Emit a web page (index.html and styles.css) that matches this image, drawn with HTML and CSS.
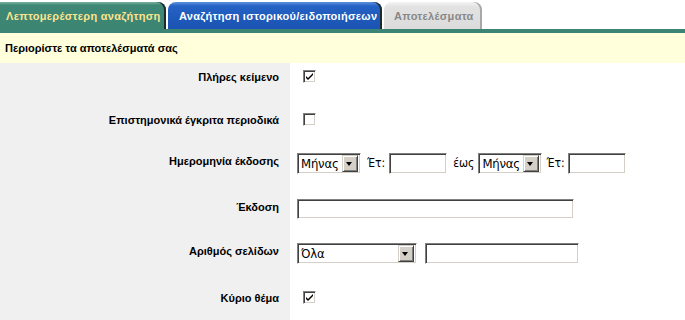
FILE: index.html
```html
<!DOCTYPE html>
<html lang="el">
<head>
  <meta charset="UTF-8" />
  <title>Λεπτομερέστερη αναζήτηση</title>
  <link rel="stylesheet" href="styles.css">
</head>
<body>
  <div class="tabs">
    <div class="tab tab-green">Λεπτομερέστερη αναζήτηση</div>
    <div class="tab tab-blue">Αναζήτηση ιστορικού/ειδοποιήσεων</div>
    <div class="tab tab-grey">Αποτελέσματα</div>
  </div>
  <div class="tab-bar"></div>
  <div class="refine">Περιορίστε τα αποτελέσματά σας</div>

  <div class="form">
    <div class="row row-check">
      <div class="label">Πλήρες κείμενο</div>
      <div class="field">
        <span class="check"><svg viewBox="0 0 9 9"><path d="M1 4l2 2 5-5v2l-5 5-2-2z"/></svg></span>
      </div>
    </div>
    <div class="row row-check">
      <div class="label">Επιστημονικά έγκριτα περιοδικά</div>
      <div class="field"><span class="check"></span></div>
    </div>
    <div class="row row-tall">
      <div class="label">Ημερομηνία έκδοσης</div>
      <div class="field">
        <div class="select sel-month"><span class="select-text">Μήνας</span><span class="select-btn"></span></div>
        <span class="txt txt-year">Έτ:</span>
        <span class="input in-year"></span>
        <span class="txt txt-to">έως</span>
        <div class="select sel-month"><span class="select-text">Μήνας</span><span class="select-btn"></span></div>
        <span class="txt txt-year2">Έτ:</span>
        <span class="input in-year"></span>
      </div>
    </div>
    <div class="row">
      <div class="label">Έκδοση</div>
      <div class="field"><span class="input in-wide"></span></div>
    </div>
    <div class="row row-mid">
      <div class="label">Αριθμός σελίδων</div>
      <div class="field">
        <div class="select sel-pages"><span class="select-text">Όλα</span><span class="select-btn"></span></div>
        <span class="input in-pages"></span>
      </div>
    </div>
    <div class="row row-check">
      <div class="label">Κύριο θέμα</div>
      <div class="field">
        <span class="check"><svg viewBox="0 0 9 9"><path d="M1 4l2 2 5-5v2l-5 5-2-2z"/></svg></span>
      </div>
    </div>
  </div>
</body>
</html>
```

FILE: styles.css
```css
* { margin: 0; padding: 0; box-sizing: border-box; }
html, body { height: 100%; }
body {
  font-family: 'Liberation Sans', Arial, sans-serif;
  font-size: 11px;
  background: #fff;
  color: #000;
  display: flex;
  flex-direction: column;
  overflow: hidden;
}
.tabs {
  flex-shrink: 0;
  display: flex;
  align-items: flex-end;
  height: 29px;
  padding-top: 2px;
  gap: 2px;
}
.tab {
  height: 27px;
  padding: 0 6px;
  display: flex;
  align-items: center;
  font-weight: bold;
  font-size: 11px;
  letter-spacing: 0.3px;
  border-radius: 8px 8px 0 0;
  box-shadow: inset -2px 0 0 #1d2a2a;
  white-space: nowrap;
}
.tab-green {
  width: 166px;
  border-radius: 0 8px 0 0;
  background: linear-gradient(#7fb4a4 0, #3f8876 3px, #3d8573);
  color: #fbe48e;
}
.tab-blue {
  width: 214px;
  padding-left: 11px;
  background: linear-gradient(#5f92dc 0, #2462c4 4px, #1a53b2);
  color: #fff;
}
.tab-grey {
  width: 98px;
  padding-left: 10px;
  background: linear-gradient(#f4f4f4 0, #e2e2e2 5px, #dcdcdc);
  color: #888;
  box-shadow: inset -2px 0 0 #a8a8a8;
}
.tab-bar {
  flex-shrink: 0;
  height: 4px;
  background: #3c8473;
}
.refine {
  flex-shrink: 0;
  height: 30px;
  background: #ffffdc;
  font-weight: bold;
  font-size: 11px;
  padding: 0 0 0 5px;
  display: flex;
  align-items: center;
}
.form {
  flex: 1;
  min-height: 0;
  overflow: hidden;
  display: flex;
  flex-direction: column;
  background: linear-gradient(to right, #f0f0f0 290px, #fff 290px);
}
.row {
  flex-shrink: 0;
  display: grid;
  grid-template-columns: 290px 1fr;
  height: 44px;
}
.row-check { height: 43px; }
.row-tall { height: 46px; }
.row-mid { height: 45px; }
.label {
  text-align: right;
  font-weight: bold;
  padding: 5px 11px 0 0;
  line-height: 14px;
}
.row-check .label { padding-top: 7px; }
.field {
  display: flex;
  align-items: flex-start;
  padding: 4px 0 0 7px;
  font-family: Tahoma, 'DejaVu Sans Condensed', 'Liberation Sans', sans-serif;
  font-size: 12px;
}
.row-check .field { padding: 7px 0 0 13px; }
.check {
  width: 13px;
  height: 13px;
  background: #fff;
  border: 1px solid;
  border-color: #808080 #fff #fff #808080;
  box-shadow: inset 1px 1px 0 #404040, inset -1px -1px 0 #d4d0c8;
  display: flex;
  align-items: center;
  justify-content: center;
}
.check svg {
  width: 9px;
  height: 9px;
  fill: #000;
}
.input {
  display: inline-block;
  height: 21px;
  background: #fff;
  border: 1px solid;
  border-color: #808080 #fff #fff #808080;
  box-shadow: inset 1px 1px 0 #404040, inset -1px -1px 0 #d4d0c8;
}
.in-year { width: 58px; }
.in-wide { width: 277px; height: 20px; }
.in-pages { width: 154px; margin-left: 8px; }
.select {
  display: flex;
  align-items: center;
  height: 21px;
  background: #fff;
  border: 1px solid;
  border-color: #808080 #fff #fff #808080;
  box-shadow: inset 1px 1px 0 #404040, inset -1px -1px 0 #d4d0c8;
  padding: 2px;
}
.sel-month { width: 64px; }
.sel-pages { width: 120px; }
.select-text {
  flex: 1;
  padding-left: 1px;
  font-size: 13px;
  line-height: 16px;
  color: #000;
  letter-spacing: -0.2px;
}
.select-btn {
  width: 16px;
  height: 17px;
  background: #d4d0c8;
  border: 1px solid;
  border-color: #d4d0c8 #404040 #404040 #d4d0c8;
  box-shadow: inset 1px 1px 0 #fff, inset -1px -1px 0 #808080;
  position: relative;
}
.select-btn::after {
  content: '';
  position: absolute;
  left: 3px;
  top: 6px;
  border-left: 3.5px solid transparent;
  border-right: 3.5px solid transparent;
  border-top: 4px solid #000;
}
.txt {
  line-height: 21px;
  color: #000;
}
.txt-year { margin: 0 4px 0 6px; }
.txt-to { margin: 0 4px 0 6px; }
.txt-year2 { margin: 0 3px 0 4px; }
```
